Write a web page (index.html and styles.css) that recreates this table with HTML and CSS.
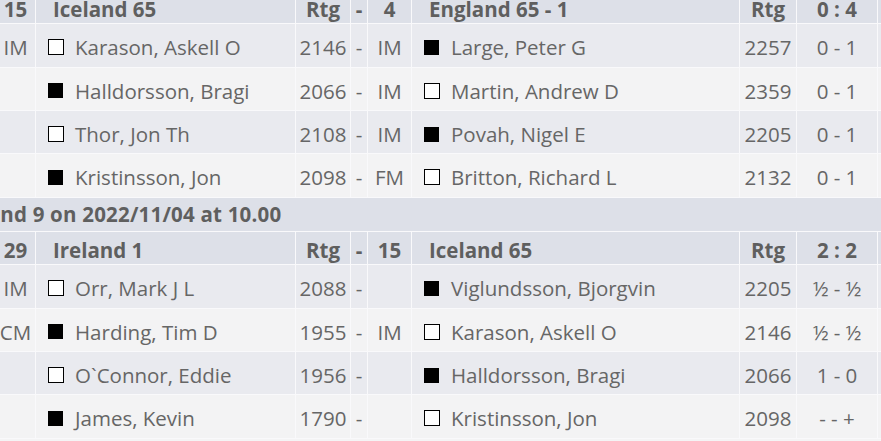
FILE: index.html
```html
<!DOCTYPE html>
<html lang="en">
<head>
<meta charset="utf-8">
<title>Team pairings</title>
<link rel="stylesheet" href="styles.css">
</head>
<body>
<div class="viewport">
  <div class="sheet">
    <div class="row head">
      <div class="cell c">Bo.</div>
      <div class="cell c">15</div>
      <div class="cell team">Iceland 65</div>
      <div class="cell c">Rtg</div>
      <div class="cell c">-</div>
      <div class="cell c">4</div>
      <div class="cell team">England 65 - 1</div>
      <div class="cell c">Rtg</div>
      <div class="cell c">0 : 4</div>
      <div class="cell"></div>
    </div>
    <div class="row data odd">
      <div class="cell c">8.1</div>
      <div class="cell c">IM</div>
      <div class="cell name"><span class="piece w"></span>Karason, Askell O</div>
      <div class="cell c">2146</div>
      <div class="cell c">-</div>
      <div class="cell c">IM</div>
      <div class="cell name"><span class="piece b"></span>Large, Peter G</div>
      <div class="cell c">2257</div>
      <div class="cell c">0 - 1</div>
      <div class="cell"></div>
    </div>
    <div class="row data even">
      <div class="cell c">8.2</div>
      <div class="cell c"></div>
      <div class="cell name"><span class="piece b"></span>Halldorsson, Bragi</div>
      <div class="cell c">2066</div>
      <div class="cell c">-</div>
      <div class="cell c">IM</div>
      <div class="cell name"><span class="piece w"></span>Martin, Andrew D</div>
      <div class="cell c">2359</div>
      <div class="cell c">0 - 1</div>
      <div class="cell"></div>
    </div>
    <div class="row data odd">
      <div class="cell c">8.3</div>
      <div class="cell c"></div>
      <div class="cell name"><span class="piece w"></span>Thor, Jon Th</div>
      <div class="cell c">2108</div>
      <div class="cell c">-</div>
      <div class="cell c">IM</div>
      <div class="cell name"><span class="piece b"></span>Povah, Nigel E</div>
      <div class="cell c">2205</div>
      <div class="cell c">0 - 1</div>
      <div class="cell"></div>
    </div>
    <div class="row data even">
      <div class="cell c">8.4</div>
      <div class="cell c"></div>
      <div class="cell name"><span class="piece b"></span>Kristinsson, Jon</div>
      <div class="cell c">2098</div>
      <div class="cell c">-</div>
      <div class="cell c">FM</div>
      <div class="cell name"><span class="piece w"></span>Britton, Richard L</div>
      <div class="cell c">2132</div>
      <div class="cell c">0 - 1</div>
      <div class="cell"></div>
    </div>
    <div class="round">Round 9 on 2022/11/04 at 10.00</div>
    <div class="row head">
      <div class="cell c">Bo.</div>
      <div class="cell c">29</div>
      <div class="cell team">Ireland 1</div>
      <div class="cell c">Rtg</div>
      <div class="cell c">-</div>
      <div class="cell c">15</div>
      <div class="cell team">Iceland 65</div>
      <div class="cell c">Rtg</div>
      <div class="cell c">2 : 2</div>
      <div class="cell"></div>
    </div>
    <div class="row data odd">
      <div class="cell c">1.1</div>
      <div class="cell c">IM</div>
      <div class="cell name"><span class="piece w"></span>Orr, Mark J L</div>
      <div class="cell c">2088</div>
      <div class="cell c">-</div>
      <div class="cell c"></div>
      <div class="cell name"><span class="piece b"></span>Viglundsson, Bjorgvin</div>
      <div class="cell c">2205</div>
      <div class="cell c">½ - ½</div>
      <div class="cell"></div>
    </div>
    <div class="row data even">
      <div class="cell c">1.2</div>
      <div class="cell c">CM</div>
      <div class="cell name"><span class="piece b"></span>Harding, Tim D</div>
      <div class="cell c">1955</div>
      <div class="cell c">-</div>
      <div class="cell c">IM</div>
      <div class="cell name"><span class="piece w"></span>Karason, Askell O</div>
      <div class="cell c">2146</div>
      <div class="cell c">½ - ½</div>
      <div class="cell"></div>
    </div>
    <div class="row data odd">
      <div class="cell c">1.3</div>
      <div class="cell c"></div>
      <div class="cell name"><span class="piece w"></span>O`Connor, Eddie</div>
      <div class="cell c">1956</div>
      <div class="cell c">-</div>
      <div class="cell c"></div>
      <div class="cell name"><span class="piece b"></span>Halldorsson, Bragi</div>
      <div class="cell c">2066</div>
      <div class="cell c">1 - 0</div>
      <div class="cell"></div>
    </div>
    <div class="row data even">
      <div class="cell c">1.4</div>
      <div class="cell c"></div>
      <div class="cell name"><span class="piece b"></span>James, Kevin</div>
      <div class="cell c">1790</div>
      <div class="cell c">-</div>
      <div class="cell c"></div>
      <div class="cell name"><span class="piece w"></span>Kristinsson, Jon</div>
      <div class="cell c">2098</div>
      <div class="cell c">- - +</div>
      <div class="cell"></div>
    </div>
    <div class="row spacer"></div>
  </div>
</div>
</body>
</html>
```
FILE: styles.css
```css
html, body {
  margin: 0;
  padding: 0;
  overflow: hidden;
  background: #f4f4f5;
}

.viewport {
  width: 881px;
  height: 441px;
  overflow: hidden;
}

.sheet {
  margin: -9px 0 0 -60px;
  width: 1000px;
  display: grid;
  row-gap: 1px;
  background: #f9f9fb;
  font-family: "Open Sans", "Noto Sans", sans-serif;
  font-size: 20.5px;
  color: #666;
}

.row {
  display: grid;
  grid-template-columns: 55px 39px 259px 54px 16px 43px 327px 56px 80px 60px;
  column-gap: 1px;
}

.cell {
  display: flex;
  align-items: center;
  white-space: nowrap;
  overflow: hidden;
  box-sizing: border-box;
}

.c {
  justify-content: center;
}

.head {
  height: 32.33px;
  font-weight: 700;
  color: #5f5f5f;
}

.head .cell {
  background: #dde0e8;
  padding-top: 3px;
}

.data {
  height: 42.33px;
}

.data .cell {
  padding-top: 4px;
}

.odd .cell {
  background: #e9eaef;
}

.even .cell {
  background: #f3f3f4;
}

.head .team {
  padding-left: 17px;
}

.data .name {
  padding-left: 12px;
}

.piece {
  box-sizing: border-box;
  border: 1px solid #000;
  flex: none;
}

.piece.w {
  width: 16px;
  height: 16px;
  background: #fff;
  margin-right: 11px;
}

.piece.b {
  width: 15px;
  height: 15px;
  background: #000;
  margin-right: 12px;
}

.round {
  height: 33.33px;
  display: flex;
  align-items: center;
  padding-left: 20px;
  background: #dde0e8;
  font-weight: 700;
  color: #5f5f5f;
  white-space: nowrap;
  letter-spacing: 0.2px;
}

.spacer {
  height: 20px;
  background: #f4f4f5;
}
```
